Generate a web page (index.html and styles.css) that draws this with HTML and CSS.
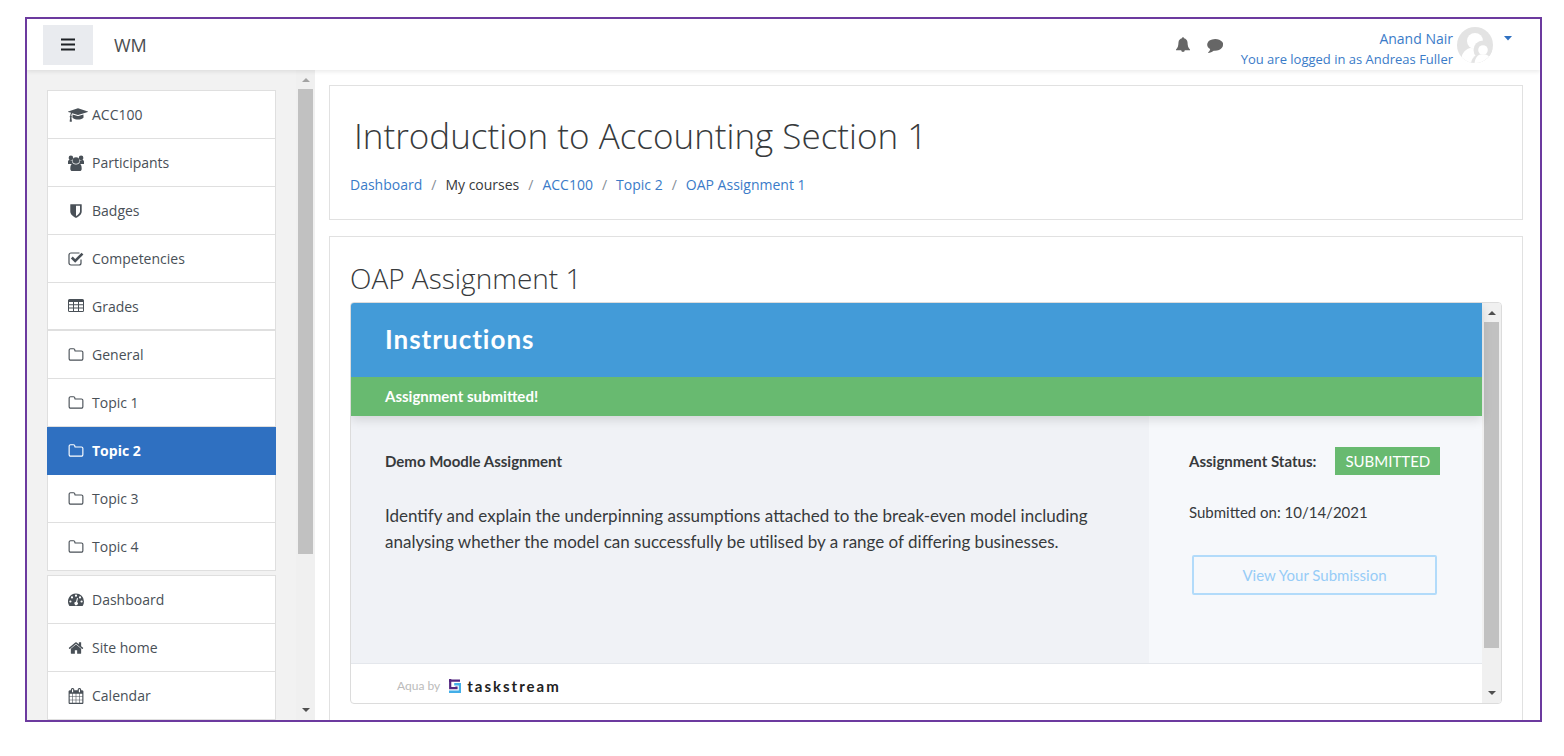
FILE: index.html
```html
<!DOCTYPE html>
<html lang="en">
<head>
<meta charset="utf-8">
<title>OAP Assignment 1</title>
<link rel="stylesheet" href="styles.css">
</head>
<body>
<svg class="sprite" aria-hidden="true">
  <symbol id="folder" viewBox="0 0 1792 1792"><path d="M1600 1312v-704q0-40-28-68t-68-28h-704q-40 0-68-28t-28-68v-64q0-40-28-68t-68-28h-320q-40 0-68 28t-28 68v960q0 40 28 68t68 28h1216q40 0 68-28t28-68zm128-704v704q0 92-66 158t-158 66h-1216q-92 0-158-66t-66-158v-960q0-92 66-158t158-66h320q92 0 158 66t66 158v32h672q92 0 158 66t66 158z"/></symbol>
</svg>
<div class="window">
  <header class="topbar">
    <button class="menu-button" type="button" aria-label="Toggle navigation">
      <svg width="14" height="13" viewBox="0 0 14 13"><path d="M0 1.5h14M0 6.5h14M0 11.5h14" stroke="#1d2125" stroke-width="2.2"/></svg>
    </button>
    <a class="brand" href="#">WM</a>
    <nav class="user-tools">
      <button class="tool-button" type="button" aria-label="Notifications">
        <svg width="16" height="16" viewBox="0 0 16 16"><path d="M8 .3c.7 0 1 .5 1 1 2 .5 3.300 2 3.500 4 .2 3.500.5 5.500 2.500 7.200v.8H9.800a1.800 1.800 0 0 1-3.600 0H1v-.8c2-1.700 2.300-3.700 2.500-7.200.2-2 1.500-3.500 3.500-4 0-.5.3-1 1-1z"/></svg>
      </button>
      <button class="tool-button" type="button" aria-label="Messages">
        <svg width="16" height="16" viewBox="0 0 1792 1792"><path d="M1792 896q0 174-120 321.5t-326 233-450 85.500q-70 0-145-8-198 175-460 242-49 14-114 22-17 2-30.500-9t-17.500-29q-3-12 6-32l60-70q60-60 100-125t65-170q-157-89-247.500-220t-90.500-281q0-130 71-248.500t191-204.500 286-136.500 348-50.500q244 0 450 85.500t326 233 120 321.500z"/></svg>
      </button>
      <a class="user" href="#"><span class="user-name">Anand Nair</span><span class="user-note">You are logged in as Andreas Fuller</span></a>
      <svg class="avatar" width="36" height="36" viewBox="0 0 36 36"><defs><clipPath id="round"><circle cx="18" cy="18" r="18"/></clipPath></defs><g clip-path="url(#round)"><path fill="#e3e3e3" d="M0 0h36v36H0z"/><circle cx="18" cy="14" r="8" fill="#fff"/><path fill="#fff" d="M4 36c0-9 3-13 9-15l9 1 4 14z"/><circle cx="26" cy="23" r="9.500" fill="#e3e3e3"/><path fill="#e3e3e3" d="M14 36q1-6 6-8h12q4 4 5 8z"/><circle cx="26" cy="23" r="4.800" fill="#fff"/><path fill="#fff" d="M17.500 36q1-7 5.500-8.500h6q5 2 6 8.500z"/></g></svg>
      <button class="caret-button" type="button" aria-label="User menu"><svg width="8" height="5" viewBox="0 0 8 5"><path d="M0 0h8L4 4.500z"/></svg></button>
    </nav>
  </header>
  <div class="below">
    <aside class="sidebar">
      <div class="sidebar-lists">
        <nav class="list">
          <a href="#"><svg class="icon cap" viewBox="0 0 2304 1792"><path d="M1774 836l18 316q4 69-82 128t-235 93.500-323 34.500-323-34.500-235-93.500-82-128l18-316 574 181q22 7 48 7t48-7zm530-324q0 23-22 31l-1120 352q-4 1-10 1t-10-1l-652-206q-43 34-71 111.500t-34 178.500q63 36 63 109 0 69-58 107l58 433q2 14-8 25-9 11-24 11h-192q-15 0-24-11-10-11-8-25l58-433q-58-38-58-107 0-73 65-111 11-207 98-330l-333-104q-22-8-22-31t22-31l1120-352q4-1 10-1t10 1l1120 352q22 8 22 31z"/></svg>ACC100</a>
          <a href="#"><svg class="icon" viewBox="0 0 16 16"><circle cx="2.900" cy="2.900" r="2.300"/><circle cx="13.100" cy="2.900" r="2.300"/><path d="M0 9C-.4 6 .4 5 1.800 5l2.800.7C4 7 4.400 8.200 5.200 9zM16 9C16.400 6 15.600 5 14.200 5l-2.800.7C12 7 11.600 8.200 10.800 9z"/><circle cx="8" cy="5.500" r="3.300"/><path d="M2.300 13.700c0-3 .8-5.200 2.700-5.200 1.700 1.400 4.300 1.400 6 0 1.900 0 2.700 2.200 2.700 5.200 0 1.400-.8 2.300-2.100 2.300H4.400c-1.300 0-2.100-.9-2.100-2.300z"/></svg>Participants</a>
          <a href="#"><svg class="icon" viewBox="0 0 1792 1792"><path d="M1344 960v-640h-448v1137q119-63 213-137 235-184 235-360zm192-768v768q0 86-33.500 170.500t-83 150-118 127.500-126.500 103-121 77.500-89.500 49.500-42.500 20q-12 6-26 6t-26-6q-16-7-42.500-20t-89.500-49.500-121-77.500-126.500-103-118-127.500-83-150-33.500-170.500v-768q0-26 19-45t45-19h1152q26 0 45 19t19 45z"/></svg>Badges</a>
          <a href="#"><svg class="icon" viewBox="0 0 16 16"><path d="M13 8.500V12a2 2 0 0 1-2 2H3a2 2 0 0 1-2-2V4a2 2 0 0 1 2-2h8.500" fill="none" stroke="currentColor" stroke-width="1.200"/><path d="M3.800 6.500l3.400 3.400 7.300-7.300" fill="none" stroke="currentColor" stroke-width="2.600"/></svg>Competencies</a>
          <a class="section-end" href="#"><svg class="icon" viewBox="0 0 16 16"><path fill-rule="evenodd" d="M1.500 1h13A1.500 1.500 0 0 1 16 2.500v10a1.500 1.500 0 0 1-1.500 1.500h-13A1.500 1.500 0 0 1 0 12.500v-10A1.500 1.500 0 0 1 1.500 1zM1 4v2.300h4V4zm5 0v2.300h4V4zm5 0v2.300h4V4zM1 7.300v2.300h4V7.300zm5 0v2.300h4V7.300zm5 0v2.300h4V7.300zM1 10.600V13h4v-2.400zm5 0V13h4v-2.400zm5 0V13h4v-2.400z"/></svg>Grades</a>
          <a href="#"><svg class="icon"><use href="#folder"/></svg>General</a>
          <a href="#"><svg class="icon"><use href="#folder"/></svg>Topic 1</a>
          <a class="active" href="#" aria-current="page"><svg class="icon"><use href="#folder"/></svg>Topic 2</a>
          <a href="#"><svg class="icon"><use href="#folder"/></svg>Topic 3</a>
          <a href="#"><svg class="icon"><use href="#folder"/></svg>Topic 4</a>
        </nav>
        <nav class="list">
          <a href="#"><svg class="icon" viewBox="0 0 16 16"><path fill-rule="evenodd" d="M8 1.500a8 8 0 0 1 8 8c0 1.600-.4 3-1.200 4.200-.2.300-.4.300-.7.300H1.900c-.3 0-.5 0-.7-.3A8 8 0 0 1 8 1.500zM8 2.600a1.100 1.100 0 1 0 0 2.200 1.100 1.100 0 0 0 0-2.200zM4 4.300a1.100 1.100 0 1 0 0 2.200 1.100 1.100 0 0 0 0-2.200zm8 0a1.100 1.100 0 1 0 0 2.200 1.100 1.100 0 0 0 0-2.200zM2.400 8.400a1.100 1.100 0 1 0 0 2.200 1.100 1.100 0 0 0 0-2.200zm11.200 0a1.100 1.100 0 1 0 0 2.200 1.100 1.100 0 0 0 0-2.200zM9 6l-1 3.800a1.700 1.700 0 1 0 1.100.3L10 6.300z"/></svg>Dashboard</a>
          <a href="#"><svg class="icon" viewBox="0 0 1792 1792"><path d="M1472 992v480q0 26-19 45t-45 19h-384v-384h-256v384h-384q-26 0-45-19t-19-45v-480l576-477 575 474q1 2 1 6zm223-69l-62 74q-8 9-21 11h-3q-13 0-21-7l-692-577-692 577q-12 8-24 7-13-2-21-11l-62-74q-8-10-7-23.500t11-21.500l719-599q32-26 76-26t76 26l244 204v-195q0-14 9-23t23-9h192q14 0 23 9t9 23v408l219 182q10 8 11 21.500t-7 23.500z"/></svg>Site home</a>
          <a href="#"><svg class="icon" viewBox="0 0 1792 1792"><path d="M192 1664h288v-288h-288v288zm352 0h320v-288h-320v288zm-352-352h288v-320h-288v320zm352 0h320v-320h-320v320zm-352-384h288v-288h-288v288zm736 736h320v-288h-320v288zm-384-736h320v-288h-320v288zm768 736h288v-288h-288v288zm-384-352h320v-320h-320v320zm-352-864v-288q0-13-9.500-22.500t-22.500-9.500h-64q-13 0-22.500 9.500t-9.500 22.500v288q0 13 9.500 22.500t22.500 9.500h64q13 0 22.500-9.500t9.500-22.500zm736 864h288v-320h-288v320zm-384-384h320v-288h-320v288zm384 0h288v-288h-288v288zm32-480v-288q0-13-9.500-22.500t-22.500-9.500h-64q-13 0-22.500 9.500t-9.500 22.500v288q0 13 9.500 22.500t22.500 9.500h64q13 0 22.500-9.500t9.500-22.500zm384-64v1280q0 52-38 90t-90 38h-1408q-52 0-90-38t-38-90v-1280q0-52 38-90t90-38h128v-96q0-66 47-113t113-47h64q66 0 113 47t47 113v96h384v-96q0-66 47-113t113-47h64q66 0 113 47t47 113v96h128q52 0 90 38t38 90z"/></svg>Calendar</a>
        </nav>
      </div>
      <div class="scrollbar" aria-hidden="true">
        <svg class="arrow faint" viewBox="0 0 8 4"><path d="M0 4h8L4 0z"/></svg>
        <div class="track"><div class="thumb sidebar-thumb"></div></div>
        <svg class="arrow" viewBox="0 0 8 4"><path d="M0 0h8L4 4z"/></svg>
      </div>
    </aside>
    <main class="content">
      <section class="card heading-card">
        <h1>Introduction to Accounting Section 1</h1>
        <ol class="breadcrumb">
          <li><a href="#">Dashboard</a></li>
          <li>My courses</li>
          <li><a href="#">ACC100</a></li>
          <li><a href="#">Topic 2</a></li>
          <li><a href="#">OAP Assignment 1</a></li>
        </ol>
      </section>
      <section class="card work-card">
        <h2>OAP Assignment 1</h2>
        <div class="tool">
          <div class="tool-page">
            <div class="tool-top">
              <h3>Instructions</h3>
              <p class="notice">Assignment submitted!</p>
            </div>
            <div class="tool-body">
              <article class="brief">
                <h4>Demo Moodle Assignment</h4>
                <p>Identify and explain the underpinning assumptions attached to the break-even model including analysing whether the model can successfully be utilised by a range of differing businesses.</p>
              </article>
              <aside class="status">
                <div class="status-row"><strong>Assignment Status:</strong><span class="badge">SUBMITTED</span></div>
                <p>Submitted on: 10/14/2021</p>
                <button class="view-button" type="button">View Your Submission</button>
              </aside>
            </div>
            <footer class="tool-footer">
              <span class="by">Aqua by</span>
              <svg width="12" height="14" viewBox="0 0 12 14" aria-hidden="true"><path d="M12 5.200H5.200M11 5v7.800H0" fill="none" stroke="#42aee8" stroke-width="2.400"/><path d="M1.200 0v9.200h6.300V7.500M0 1.600h11" fill="none" stroke="#532680" stroke-width="2.200"/></svg>
              <span class="maker">taskstream</span>
            </footer>
          </div>
          <div class="scrollbar" aria-hidden="true">
            <svg class="arrow" viewBox="0 0 8 4"><path d="M0 4h8L4 0z"/></svg>
            <div class="track"><div class="thumb tool-thumb"></div></div>
            <svg class="arrow" viewBox="0 0 8 4"><path d="M0 0h8L4 4z"/></svg>
          </div>
        </div>
      </section>
    </main>
  </div>
</div>
</body>
</html>
```
FILE: styles.css
```css
* { box-sizing: border-box; }
body {
  margin: 0;
  background: #fff;
  color: #373a3c;
  font-family: "Open Sans", "Noto Sans", sans-serif;
  font-size: 15px;
}
h1, h2, h3, h4, p, ol { margin: 0; padding: 0; }
a { color: #3a7bc8; text-decoration: none; }
button { font: inherit; border: 0; padding: 0; background: none; cursor: pointer; }
svg { display: block; fill: currentColor; }
.sprite { position: absolute; width: 0; height: 0; }

.window {
  display: flex;
  flex-direction: column;
  height: calc(100vh - 51px);
  margin: 17px 22px 34px 25px;
  border: 2px solid #6c3a9f;
  overflow: hidden;
}
.topbar {
  position: relative;
  display: flex;
  flex: none;
  align-items: center;
  height: 51px;
  padding: 0 28px 0 16px;
  background: #fff;
  box-shadow: 0 2px 4px rgba(0, 0, 0, .08);
}
.menu-button {
  display: flex;
  align-items: center;
  justify-content: center;
  width: 50px;
  height: 40px;
  background: #e9ebef;
}
.brand { margin-left: 21px; color: #4a4d50; font-size: 18px; }
.user-tools { display: flex; align-items: center; margin-left: auto; color: #666; }
.tool-button { margin-right: 16px; color: #666; }
.user {
  display: flex;
  flex-direction: column;
  align-items: flex-end;
  margin-left: 2px;
  padding-top: 8px;
  line-height: 20px;
}
.user-name { font-size: 14px; }
.user-note { font-size: 13px; }
.avatar { margin-left: 4px; }
.caret-button { margin: 0 0 12px 11px; color: #2f70c1; }

.below { display: flex; flex: 1; min-height: 0; }
.sidebar { display: flex; flex: none; width: 288px; background: #f2f2f2; }
.sidebar-lists { flex: 1; padding: 20px 20px 0; overflow: hidden; }
.list { margin-bottom: 4px; border: 1px solid #dfdfdf; border-bottom: 0; background: #fff; }
.list a {
  display: flex;
  align-items: center;
  height: 48px;
  padding-left: 20px;
  border-bottom: 1px solid #dfdfdf;
  color: #495057;
  font-size: 14px;
}
.list a.section-end { border-bottom-width: 2px; }
.list a.active { margin: 0 -1px; padding-left: 21px; background: #2f70c1; border-color: #2f70c1; color: #fff; font-weight: 700; }
.icon { flex: none; width: 16px; height: 16px; margin-right: 8px; }
.cap { width: 20px; margin-right: 4px; }

.scrollbar {
  display: flex;
  flex: none;
  flex-direction: column;
  align-items: center;
  width: 19px;
  padding: 8px 0;
  background: #f0f0f0;
  color: #505050;
}
.arrow { width: 8px; height: 4px; }
.faint { color: #a3a3a3; }
.track { flex: 1; width: 15px; margin: 7px 0; }
.thumb { background: #c1c1c1; }
.sidebar-thumb { height: 76%; }
.tool-thumb { height: 90%; }

.content { flex: 1; min-width: 0; padding: 15px 17px 0 14px; }
.card { border: 1px solid #e1e1e1; background: #fff; }
.heading-card { padding: 26px 20px 23px; }
h1 { padding-left: 4px; font-size: 35px; font-weight: 300; line-height: 48px; }
.breadcrumb { display: flex; flex-wrap: wrap; margin-top: 14px; list-style: none; font-size: 14px; line-height: 22px; }
.breadcrumb li + li::before { content: "/"; padding: 0 9px; color: #868e96; }
.work-card { margin-top: 16px; padding: 20px; }
h2 { font-size: 28px; font-weight: 300; line-height: 42px; }
.tool {
  display: flex;
  margin-top: 3px;
  border: 1px solid #dcdcdc;
  border-radius: 4px;
  overflow: hidden;
  font-family: Lato, sans-serif;
}
.tool-page { flex: 1; min-width: 0; }
.tool-top { position: relative; box-shadow: 0 4px 10px rgba(0, 0, 0, .12); color: #fff; }
h3 { height: 74px; padding-left: 34px; background: #439bd8; font-size: 26px; font-weight: 700; line-height: 72px; letter-spacing: 1px; }
.notice { height: 39px; padding-left: 34px; background: #68ba70; font-size: 15px; font-weight: 700; line-height: 38px; }
.tool-body { display: flex; height: 248px; border-bottom: 1px solid #e4e7ec; }
.brief { flex: 1; padding: 32px 34px; background: #f0f2f6; }
h4 { font-size: 15px; font-weight: 700; line-height: 26px; }
.brief p { max-width: 720px; margin-top: 29px; font-size: 17px; line-height: 26px; }
.status { flex: none; width: 333px; padding: 31px 40px; background: #f6f8fb; }
.status-row { display: flex; align-items: center; gap: 19px; font-size: 15px; line-height: 26px; }
.badge { padding: 0 10px; background: #68ba70; color: #fff; line-height: 28px; }
.status p { margin-top: 25px; font-size: 15px; line-height: 24px; }
.view-button {
  display: block;
  width: calc(100% - 8px);
  height: 40px;
  margin: 31px 0 0 3px;
  border: 2px solid #b2dbfa;
  border-radius: 2px;
  color: #97ccf7;
  font-size: 15px;
}
.tool-footer { display: flex; align-items: center; height: 39px; padding: 4px 46px 0; }
.by { margin-right: 9px; color: #bbb; font-size: 12px; }
.maker { margin-left: 6px; color: #222; font-size: 15px; font-weight: 700; letter-spacing: 2px; }
```
